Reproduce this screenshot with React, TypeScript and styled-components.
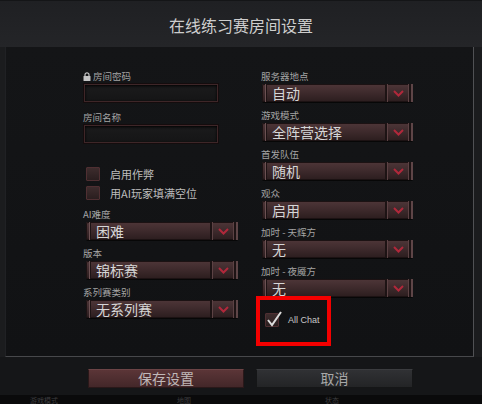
import React from 'react';
import styled, { createGlobalStyle } from 'styled-components';

const GlobalStyle = createGlobalStyle`
  body {
    margin: 0;
    background: #1b1c1e;
    font-family: "Noto Sans CJK SC", "Noto Sans", sans-serif;
  }
`;

const Dialog = styled.div`
  width: 482px;
  height: 404px;
  display: flex;
  flex-direction: column;
  background: #1b1c1e;
  overflow: hidden;
`;

const TitleBar = styled.div`
  height: 47px;
  display: flex;
  align-items: center;
  justify-content: center;
  padding-top: 1px;
  box-sizing: border-box;
  background: linear-gradient(to bottom, #1f2023, #242528);
  border-top: 1px solid #141517;
  font-size: 16px;
  color: #cdcdcd;
`;

const Panel = styled.div`
  height: 310px;
  box-sizing: border-box;
  margin: 0 8px 0 5px;
  background: linear-gradient(to bottom, #141517, #111214);
  border-left: 1px solid #202124;
  border-right: 1px solid #505154;
  border-bottom: 1px solid #47484b;
  display: grid;
  grid-template-columns: 155px 152px;
  column-gap: 23px;
  align-content: start;
  padding: 22px 0 0 77px;
`;

const Column = styled.div`
  display: flex;
  flex-direction: column;
`;

const Label = styled.div<{ $gap?: number }>`
  display: flex;
  align-items: center;
  gap: 2px;
  height: 14px;
  line-height: 14px;
  margin-top: ${p => p.$gap ?? 0}px;
  margin-bottom: 1px;
  font-size: 9.5px;
  color: #a4a4a4;
  white-space: nowrap;
`;

const TextBox = styled.div`
  width: 134px;
  height: 18px;
  margin-left: 1px;
  box-sizing: border-box;
  background: linear-gradient(to bottom, #1b1b1c, #151516);
  border: 1px solid #3e2628;
  box-shadow: inset 0 1px 3px #000, 0 0 0 1px #140c0d;
`;

const CheckRow = styled.div<{ $gap?: number }>`
  display: flex;
  align-items: center;
  gap: 10px;
  margin-top: ${p => p.$gap ?? 0}px;
  margin-left: 3px;
  height: 14px;
  font-size: 11px;
  color: #bdbdbd;
  white-space: nowrap;
`;

const Box = styled.span`
  position: relative;
  flex: none;
  width: 14px;
  height: 14px;
  box-sizing: border-box;
  background: linear-gradient(to bottom, #3d2c2d, #2a1e1f);
  border: 1px solid #4f2f32;
  border-radius: 1px;
`;

const Tick = styled.svg`
  position: absolute;
  left: 0;
  top: -4px;
  overflow: visible;
`;

const Select = styled.div<{ $inset?: number }>`
  display: flex;
  height: 18px;
  margin-left: ${p => p.$inset ?? 1}px;
  border-radius: 2px;
  background: linear-gradient(to bottom, #4e3638 0%, #3f2b2d 45%, #2b1d1e 100%);
  box-shadow: 0 1px 0 #070707, inset 0 0 0 1px #1c1213;
`;

const Cap = styled.span`
  width: 3px;
  flex: none;
  border-right: 1px solid #6c5153;
  box-shadow: 1px 0 0 #1d1314;
`;

const Value = styled.span`
  flex: 1;
  padding-left: 6px;
  font-size: 14px;
  line-height: 18px;
  color: #d6d6d6;
  white-space: nowrap;
`;

const ArrowBox = styled.span`
  width: 22px;
  flex: none;
  display: flex;
  align-items: center;
  justify-content: center;
  border-left: 2px solid #1d1314;
  border-right: 2px solid #1d1314;
  box-shadow: inset 1px 0 0 #5c4244, inset -1px 0 0 #5c4244;
`;

const EndCap = styled.span`
  width: 2px;
  flex: none;
  background: #5e4547;
`;

const Highlight = styled.div`
  width: 75px;
  height: 50px;
  box-sizing: border-box;
  margin: -1px 0 0 -5px;
  border: 4px solid #f40000;
  padding: 13px 0 0 5px;
`;

const ChatRow = styled.div`
  display: flex;
  align-items: center;
  gap: 9px;
  height: 14px;
  font-family: "Liberation Sans", Arial, sans-serif;
  font-size: 9px;
  color: #c8c8c8;
`;

const Footer = styled.div`
  height: 38px;
  display: flex;
  gap: 12px;
  padding: 12px 0 0 88px;
  box-sizing: border-box;
  background: #151618;
`;

const Button = styled.button<{ $primary?: boolean }>`
  width: ${p => (p.$primary ? 156 : 157)}px;
  height: 19px;
  padding: 0;
  box-sizing: border-box;
  font-family: inherit;
  font-size: 14px;
  line-height: 17px;
  color: ${p => (p.$primary ? '#c0b8b8' : '#a8a8a8')};
  background: ${p =>
    p.$primary
      ? 'linear-gradient(to bottom, #5b3537, #432729)'
      : 'linear-gradient(to bottom, #303134, #232426)'};
  border: 1px solid ${p => (p.$primary ? '#2a1819' : '#151617')};
  border-top-color: ${p => (p.$primary ? '#6c4446' : '#3b3c3f')};
  cursor: pointer;
`;

const BottomStrip = styled.div`
  flex: 1;
  display: flex;
  align-items: center;
  background: #0a0a0b;
  padding-left: 30px;
  font-size: 7px;
  line-height: 8px;
  color: #3c3c3e;
`;

const StripText = styled.span<{ $w: number }>`
  width: ${p => p.$w}px;
  flex: none;
`;

const Chevron = () => (
  <svg width="11" height="7" viewBox="0 0 11 7">
    <polyline points="1,1 5.5,5.5 10,1" fill="none" stroke="#b1283b" strokeWidth="2" />
  </svg>
);

const Lock = () => (
  <svg width="8" height="9" viewBox="0 0 8 9">
    <path d="M2 4V2.8a2 2 0 0 1 4 0V4" fill="none" stroke="#c4c4c4" strokeWidth="1.2" />
    <rect x="0.5" y="4" width="7" height="5" rx="0.5" fill="#c4c4c4" />
  </svg>
);

const Dropdown: React.FC<{ value: string; inset?: number }> = ({ value, inset }) => (
  <Select $inset={inset}>
    <Cap />
    <Value>{value}</Value>
    <ArrowBox>
      <Chevron />
    </ArrowBox>
    <EndCap />
  </Select>
);

const Checkbox: React.FC<{ checked?: boolean }> = ({ checked }) => (
  <Box>
    {checked && (
      <Tick width="18" height="18" viewBox="0 0 18 18">
        <polyline points="2,10 6,15 15,2" fill="none" stroke="#dcdcdc" strokeWidth="2" />
      </Tick>
    )}
  </Box>
);

const rightFields = [
  { label: '服务器地点', value: '自动' },
  { label: '游戏模式', value: '全阵营选择' },
  { label: '首发队伍', value: '随机' },
  { label: '观众', value: '启用' },
  { label: '加时 - 天辉方', value: '无' },
  { label: '加时 - 夜魇方', value: '无' },
];

const leftFields = [
  { label: 'AI难度', value: '困难' },
  { label: '版本', value: '锦标赛' },
  { label: '系列赛类别', value: '无系列赛' },
];

export default function App() {
  return (
    <>
      <GlobalStyle />
      <Dialog>
        <TitleBar>在线练习赛房间设置</TitleBar>
        <Panel>
          <Column>
            <Label>
              <Lock />
              房间密码
            </Label>
            <TextBox />
            <Label $gap={8}>房间名称</Label>
            <TextBox />
            <CheckRow $gap={24}>
              <Checkbox />
              启用作弊
            </CheckRow>
            <CheckRow $gap={5}>
              <Checkbox />
              用AI玩家填满空位
            </CheckRow>
            {leftFields.map((f, i) => (
              <React.Fragment key={f.label}>
                <Label $gap={i === 0 ? 7 : 6}>{f.label}</Label>
                <Dropdown value={f.value} inset={3} />
              </React.Fragment>
            ))}
          </Column>
          <Column>
            {rightFields.map((f, i) => (
              <React.Fragment key={f.label}>
                <Label $gap={i === 0 ? 0 : 6}>{f.label}</Label>
                <Dropdown value={f.value} />
              </React.Fragment>
            ))}
            <Highlight>
              <ChatRow>
                <Checkbox checked />
                All Chat
              </ChatRow>
            </Highlight>
          </Column>
        </Panel>
        <Footer>
          <Button $primary>保存设置</Button>
          <Button>取消</Button>
        </Footer>
        <BottomStrip>
          <StripText $w={147}>游戏模式</StripText>
          <StripText $w={148}>地图</StripText>
          <StripText $w={60}>状态</StripText>
        </BottomStrip>
      </Dialog>
    </>
  );
}
